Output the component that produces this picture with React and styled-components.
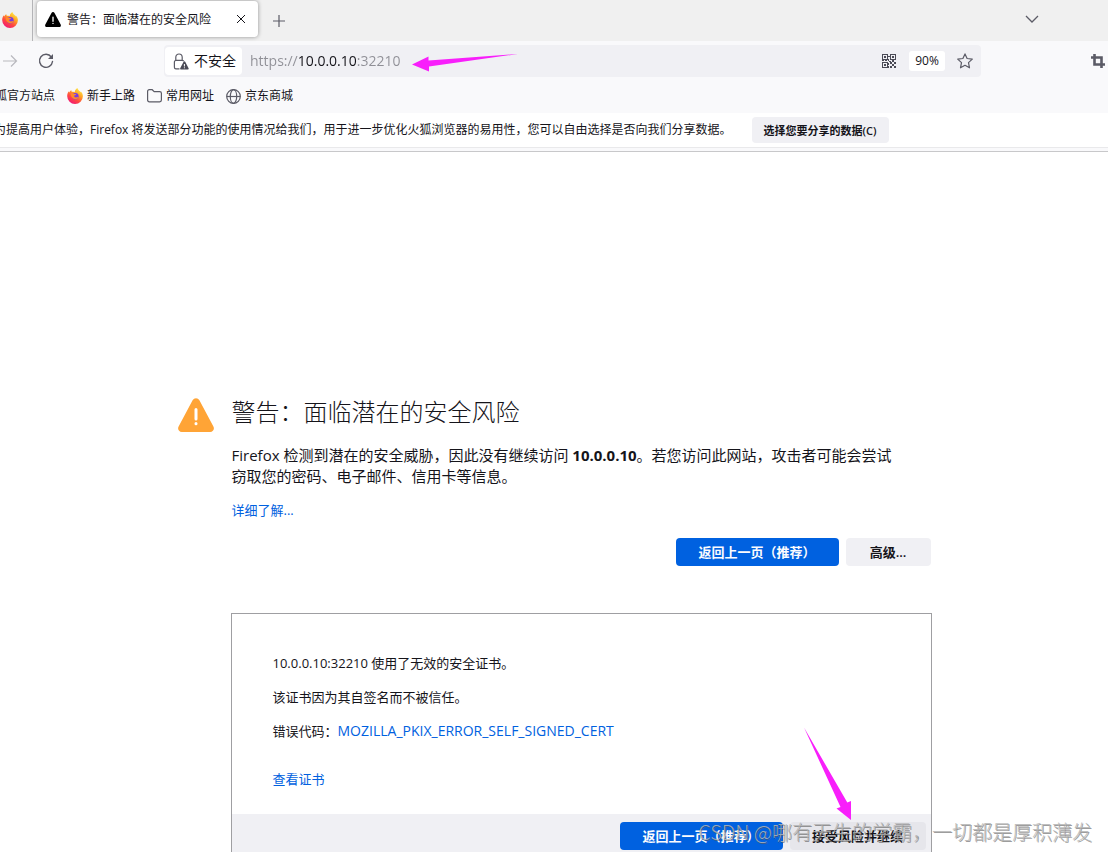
import React, { useId, useState } from "react";
import styled, { createGlobalStyle } from "styled-components";

const GlobalStyle = createGlobalStyle`
    * {
        box-sizing: border-box;
    }

    body {
        margin: 0;
        background-color: #fff;
        color: #15141a;
        font-family: "Open Sans", "Noto Sans CJK SC", sans-serif;
        font-size: 12px;
    }

    button, input {
        font-family: inherit;
        color: inherit;
    }

    svg {
        display: block;
        flex-shrink: 0;
    }
`;

const Page = styled.div`
    position: relative;
    height: 100vh;
    overflow: hidden;
`;

const TabStrip = styled.div`
    display: flex;
    align-items: center;
    height: 41px;
    background-color: #f0f0f0;
`;

const PinnedTab = styled.button`
    display: flex;
    align-items: center;
    width: 33px;
    height: 41px;
    padding: 0 0 2px 2px;
    border: none;
    border-right: 1px solid #b5b5b8;
    background: none;
`;

const Tab = styled.div`
    display: flex;
    align-items: center;
    width: 221px;
    height: 36px;
    margin: 0 12px 3px 4px;
    padding: 0 8px;
    border-radius: 4px;
    background-color: #fff;
    box-shadow: 0 0 4px rgba(0, 0, 0, 0.4);
`;

const TabTitle = styled.span`
    flex: 1;
    margin-left: 6px;
    padding-top: 2px;
    white-space: nowrap;
    line-height: 18px;
`;

const IconButton = styled.button`
    display: flex;
    align-items: center;
    justify-content: center;
    width: ${({ $size }) => $size || 18}px;
    height: 18px;
    padding: 0;
    border: none;
    background: none;
    color: ${({ $color }) => $color || "#5b5b66"};
`;

const TabList = styled(IconButton)`
    margin: 0 67px 4px auto;
`;

const Toolbar = styled.div`
    display: flex;
    align-items: center;
    height: 40px;
    padding-right: 1px;
    background-color: #f9f9fb;
`;

const UrlBar = styled.div`
    position: relative;
    display: flex;
    align-items: center;
    flex: 1;
    height: 32px;
    margin: 0 108px 0 92px;
    padding: 0 7px 0 1px;
    border-radius: 4px;
    background-color: #f0f0f4;
`;

const Identity = styled.button`
    display: flex;
    align-items: center;
    gap: 5px;
    width: 77px;
    height: 28px;
    padding: 0 0 0 8px;
    border: none;
    border-radius: 4px;
    background-color: #fff;
    font-size: 14px;
    line-height: 26px;
    white-space: nowrap;
`;

/* scheme and port are dimmed, the host is dark */
const UrlInput = styled.input`
    flex: 1;
    min-width: 0;
    height: 28px;
    padding: 0 0 2px 8px;
    border: none;
    outline: none;
    font-size: 14px;
    color: transparent;
    background: linear-gradient(
        90deg,
        #8f8f96 57px,
        #15141a 57px,
        #15141a 115px,
        #8f8f96 115px
    );
    background-clip: text;
    -webkit-background-clip: text;
`;

const Zoom = styled.button`
    width: 36px;
    height: 20px;
    margin: 0 11px;
    padding: 0;
    border: none;
    border-radius: 3px;
    background-color: #fff;
    font-size: 12px;
    line-height: 20px;
`;

const Bookmarks = styled.nav`
    display: flex;
    align-items: center;
    gap: 12px;
    height: 32px;
    margin-left: -17px;
    padding-bottom: 2px;
`;

const BookmarksBar = styled.div`
    overflow: hidden;
    background-color: #f9f9fb;
`;

const Bookmark = styled.a`
    display: flex;
    align-items: center;
    gap: 4px;
    color: inherit;
    text-decoration: none;
    white-space: nowrap;
    line-height: 18px;
`;

const Notification = styled.div`
    display: flex;
    align-items: center;
    gap: 20px;
    height: 34px;
    margin-left: -6px;
    line-height: 16px;
    white-space: nowrap;
`;

const NotificationButton = styled.button`
    width: 137px;
    height: 26px;
    padding: 0;
    border: none;
    border-radius: 4px;
    background-color: #f0f0f4;
    font-size: 11px;
    font-weight: 600;
`;

const ContentEdge = styled.div`
    height: 5px;
    border-top: 1px solid #e9e9eb;
    border-bottom: 1px solid #c8c8ca;
    background-color: #f9f9fb;
`;

const Main = styled.main`
    display: flex;
    align-items: flex-start;
    gap: 18px;
    max-width: 753px;
    margin: 0 auto;
    padding-top: 245px;
`;

const Content = styled.div`
    flex: 1;
    min-width: 0;
`;

const Title = styled.h1`
    margin: 0 0 18px;
    font-size: 24px;
    font-weight: 300;
    line-height: 30px;
`;

const Description = styled.p`
    margin: 0 0 13px;
    font-size: 15px;
    line-height: 21px;
`;

const Link = styled.a`
    color: #0061e0;
    font-size: ${({ $size }) => $size || 13}px;
    line-height: 20px;
    text-decoration: none;
`;

const Actions = styled.div`
    display: flex;
    justify-content: flex-end;
    gap: 7px;
    margin-top: 18px;
`;

const Button = styled.button`
    position: relative;
    min-width: ${({ $width }) => $width}px;
    height: 28px;
    padding: 0 0 2px;
    border: none;
    border-radius: 4px;
    background-color: ${({ $primary }) => ($primary ? "#0061e0" : "#f0f0f4")};
    color: ${({ $primary }) => ($primary ? "#fbfbfe" : "#15141a")};
    font-size: 13px;
    font-weight: 600;
    white-space: nowrap;
`;

const Panel = styled.section`
    margin: 47px -1px 0;
    border: 1px solid #9f9fa2;
`;

const PanelBody = styled.div`
    display: flex;
    flex-direction: column;
    align-items: flex-start;
    gap: 14px;
    padding: 39px 41px 25px;
    font-size: 13px;
    line-height: 20px;
`;

const PanelText = styled.p`
    margin: 0;
`;

const PanelLink = styled(Link)`
    margin-top: 14px;
`;

const PanelActions = styled(Actions)`
    margin: 0;
    padding: 8px 5px;
    background-color: #f0f0f4;
`;

const AcceptButton = styled(Button)`
    background-color: #e6e6eb;
`;

const Arrow = styled.svg`
    position: absolute;
    left: ${({ $left }) => $left}px;
    top: ${({ $top }) => $top}px;
    fill: #f81ffb;
    pointer-events: none;
`;

const Watermark = styled.div`
    position: absolute;
    right: 16px;
    bottom: 5px;
    color: rgba(180, 180, 180, 0.85);
    font-family: "Noto Sans CJK SC", sans-serif;
    font-size: 20px;
    font-weight: 300;
    line-height: 30px;
    text-shadow: 1px 1px 0 rgba(90, 90, 90, 0.6);
    white-space: nowrap;
    pointer-events: none;
`;

const FirefoxIcon = () => {
    const id = useId();

    return (
        <svg width="16" height="16" viewBox="0 0 16 16">
            <defs>
                <linearGradient id={id} x1="0.85" y1="0.05" x2="0.25" y2="1">
                    <stop offset="0" stopColor="#fff44f" />
                    <stop offset="0.35" stopColor="#ffa324" />
                    <stop offset="0.65" stopColor="#ff4a3f" />
                    <stop offset="1" stopColor="#f0147a" />
                </linearGradient>
            </defs>
            <path
                fill={`url(#${id})`}
                d="M10.4 0c.4 1.500 1.600 2.400 2.700 3.500.5.4.8.8 1.100 1.300.1-.5 0-.9-.2-1.400 1.200 1.200 1.900 3 1.900 4.900A7.800 7.800 0 0 1 8.100 16 7.800 7.800 0 0 1 .2 8.300c0-2 .5-3.700 1.600-5 0 .5.1.9.3 1.200C2.600 3.600 3.300 2.600 4.300 2c-.1.7.1 1.300.5 1.800 1 .1 2 0 3 .4C7.500 2.700 8.800.9 10.400 0Z"
            />
            <circle cx="8.300" cy="8.300" r="3.300" fill="#7a3be0" />
            <path
                fill="#ff8a2a"
                d="M3.600 5.600c1.300-.8 2.600-.3 3.600.5h2c.1.8-1 1.200-1.900 1.600-.3.9.5 1.700 1.700 1.700 1 0 1.600-.7 2.500-.2-.6 1.500-2 2.100-3.300 2-2.500-.1-4.500-2.300-4.600-5.600Z"
            />
        </svg>
    );
};

const WarningIcon = ({ size, height, color }) => (
    <svg width={size} height={height} viewBox="0 0 36 34">
        <path
            fill={color}
            d="M14.600 2.200a3.900 3.900 0 0 1 6.800 0l14 26.200c1.400 2.600-.3 5.600-3.200 5.600H3.800C.9 34-.8 31 .6 28.400Z"
        />
        <path
            stroke="#fff"
            strokeWidth="3"
            strokeLinecap="round"
            d="M18 11.500v9.500M18 25.600v.2"
        />
    </svg>
);

const CloseIcon = () => (
    <svg width="10" height="10" viewBox="0 0 10 10" stroke="#15141a" fill="none">
        <path d="M1 1l8 8M9 1l-8 8" />
    </svg>
);

const PlusIcon = () => (
    <svg width="12" height="12" viewBox="0 0 12 12" stroke="currentColor" fill="none">
        <path d="M6 0v12M0 6h12" strokeWidth="1.200" />
    </svg>
);

const ChevronIcon = () => (
    <svg width="14" height="8" viewBox="0 0 14 8" stroke="currentColor" fill="none">
        <path d="M1 1l6 6 6-6" strokeWidth="1.300" />
    </svg>
);

const ForwardIcon = () => (
    <svg width="16" height="14" viewBox="0 0 16 14" stroke="currentColor" fill="none">
        <path d="M1 7h13.500M9 1.500L14.500 7 9 12.500" strokeWidth="1.200" />
    </svg>
);

const ReloadIcon = () => (
    <svg width="16" height="16" viewBox="0 0 16 16" stroke="currentColor" fill="none">
        <path d="M13.300 4A6.500 6.500 0 1 0 14.500 8.500" strokeWidth="1.400" strokeLinecap="round" />
        <path d="M15 1v5h-5z" fill="currentColor" stroke="none" />
    </svg>
);

const LockIcon = () => (
    <svg width="16" height="17" viewBox="0 0 16 17" fill="none" stroke="#5b5b66">
        <path
            d="M6.500 15.800H3a1.600 1.600 0 0 1-1.600-1.600V9A1.600 1.600 0 0 1 3 7.400h6.200A1.600 1.600 0 0 1 10.700 8.200M2.800 7.400V4.200a3.200 3.200 0 0 1 6.400 0v3.200"
            strokeWidth="1.200"
        />
        <path
            d="M10.600 8.800a.9.9 0 0 1 1.600 0l3.400 6.400c.3.600-.1 1.300-.8 1.300H8c-.7 0-1.100-.7-.8-1.300Z"
            fill="#4a4a55"
            stroke="none"
        />
        <path d="M11.400 11v2.500M11.400 14.300v1" stroke="#fff" strokeWidth="1" />
    </svg>
);

const QrIcon = () => (
    <svg width="14" height="14" viewBox="0 0 14 14" fill="#4a4a55">
        <path
            fillRule="evenodd"
            d="M0 0h6v6H0zM1 1v4h4V1zM8 0h6v6H8zM9 1v4h4V1zM0 8h6v6H0zM1 9v4h4V9z"
        />
        <path d="M2 2h2v2H2zM10 2h2v2h-2zM2 10h2v2H2zM6 2h2v1H6zM6 5h1v2H6zM0 6h2v1H0zM3 6h2v1H3zM7 7h2v1H7zM8 8h2v2H8zM10 6h2v2h-2zM12 8h2v2h-2zM10 10h2v2h-2zM6 9h1v2H6zM8 12h2v2H8zM12 12h2v2h-2zM6 12h1v2H6z" />
    </svg>
);

const StarIcon = () => (
    <svg width="16" height="16" viewBox="0 0 16 16" stroke="currentColor" fill="none">
        <path
            d="M8 .9l2.100 4.600 5.200.6-3.800 3.500 1 5.200L8 12.300l-4.500 2.500 1-5.200L.7 6.100l5.200-.6Z"
            strokeWidth="1.200"
            strokeLinejoin="round"
        />
    </svg>
);

const CropIcon = () => (
    <svg width="14" height="14" viewBox="0 0 14 14" stroke="currentColor" fill="none">
        <path d="M0 3.500h10.500V14M3.500 0v10.500H14" strokeWidth="2.600" />
    </svg>
);

const FolderIcon = () => (
    <svg width="15" height="14" viewBox="0 0 15 14" stroke="#5b5b66" fill="none">
        <path
            d="M.6 2.400c0-1 .7-1.700 1.700-1.700h2.900l2 1.900h5.500c1 0 1.700.7 1.700 1.700v6.800c0 1-.7 1.700-1.700 1.700H2.300c-1 0-1.700-.7-1.700-1.700Z"
            strokeWidth="1.200"
        />
    </svg>
);

const GlobeIcon = () => (
    <svg width="15" height="15" viewBox="0 0 15 15" stroke="#5b5b66" fill="none" strokeWidth="1.200">
        <circle cx="7.500" cy="7.500" r="6.800" />
        <ellipse cx="7.500" cy="7.500" rx="3.200" ry="6.800" />
        <path d="M.7 7.500h13.600" />
    </svg>
);

const App = () => {
    const [url, setUrl] = useState("https://10.0.0.10:32210");

    return (
        <Page>
            <GlobalStyle />

            <TabStrip>
                <PinnedTab aria-label="Firefox">
                    <FirefoxIcon />
                </PinnedTab>
                <Tab>
                    <WarningIcon size={16} height={15} color="#000" />
                    <TabTitle>警告：面临潜在的安全风险</TabTitle>
                    <IconButton aria-label="关闭标签页">
                        <CloseIcon />
                    </IconButton>
                </Tab>
                <IconButton aria-label="新建标签页">
                    <PlusIcon />
                </IconButton>
                <TabList aria-label="列出所有标签页">
                    <ChevronIcon />
                </TabList>
            </TabStrip>

            <Toolbar>
                <IconButton aria-label="前进" $size={20} $color="#b9b9be">
                    <ForwardIcon />
                </IconButton>
                <IconButton aria-label="刷新" $size={52}>
                    <ReloadIcon />
                </IconButton>
                <UrlBar>
                    <Identity>
                        <LockIcon />
                        不安全
                    </Identity>
                    <UrlInput
                        aria-label="网址"
                        value={url}
                        spellCheck={false}
                        onChange={(e) => setUrl(e.target.value)}
                    />
                    <IconButton aria-label="二维码">
                        <QrIcon />
                    </IconButton>
                    <Zoom>90%</Zoom>
                    <IconButton aria-label="添加书签">
                        <StarIcon />
                    </IconButton>
                    <Arrow $left={248} $top={8} width="107" height="20" viewBox="0 0 107 20">
                        <path d="M0 11.500L16.500 3.500V7.500L106 1 17 13.500V18.500Z" />
                    </Arrow>
                </UrlBar>
                <IconButton aria-label="截图">
                    <CropIcon />
                </IconButton>
            </Toolbar>

            <BookmarksBar>
                <Bookmarks>
                    <Bookmark href="#official">火狐官方站点</Bookmark>
                    <Bookmark href="#start">
                        <FirefoxIcon />
                        新手上路
                    </Bookmark>
                    <Bookmark href="#common">
                        <FolderIcon />
                        常用网址
                    </Bookmark>
                    <Bookmark href="#jd">
                        <GlobeIcon />
                        京东商城
                    </Bookmark>
                </Bookmarks>
            </BookmarksBar>

            <Notification>
                <span>
                    为提高用户体验，Firefox 将发送部分功能的使用情况给我们，用于进一步优化火狐浏览器的易用性，您可以自由选择是否向我们分享数据。
                </span>
                <NotificationButton>选择您要分享的数据(C)</NotificationButton>
            </Notification>
            <ContentEdge />

            <Main>
                <WarningIcon size={36} height={36} color="#ffa436" />
                <Content>
                    <Title>警告：面临潜在的安全风险</Title>
                    <Description>
                        Firefox 检测到潜在的安全威胁，因此没有继续访问 <b>10.0.0.10</b>。若您访问此网站，攻击者可能会尝试
                        <br />
                        窃取您的密码、电子邮件、信用卡等信息。
                    </Description>
                    <Link href="#more">详细了解...</Link>
                    <Actions>
                        <Button $primary $width={163}>返回上一页（推荐）</Button>
                        <Button $width={85}>高级...</Button>
                    </Actions>

                    <Panel>
                        <PanelBody>
                            <PanelText>10.0.0.10:32210 使用了无效的安全证书。</PanelText>
                            <PanelText>该证书因为其自签名而不被信任。</PanelText>
                            <PanelText>
                                错误代码：<Link href="#code" $size={14}>MOZILLA_PKIX_ERROR_SELF_SIGNED_CERT</Link>
                            </PanelText>
                            <PanelLink href="#certificate">查看证书</PanelLink>
                        </PanelBody>
                        <PanelActions>
                            <Button $primary $width={163}>返回上一页（推荐）</Button>
                            <AcceptButton $width={136}>
                                接受风险并继续
                                <Arrow $left={13} $top={-96} width="50" height="96" viewBox="0 0 50 96">
                                    <path d="M1 1.500L44.300 76.500 48 75V94L33.500 82.500 37.500 81Z" />
                                </Arrow>
                            </AcceptButton>
                        </PanelActions>
                    </Panel>
                </Content>
            </Main>

            <Watermark>CSDN @哪有天生的学霸，一切都是厚积薄发</Watermark>
        </Page>
    );
};

export default App;
